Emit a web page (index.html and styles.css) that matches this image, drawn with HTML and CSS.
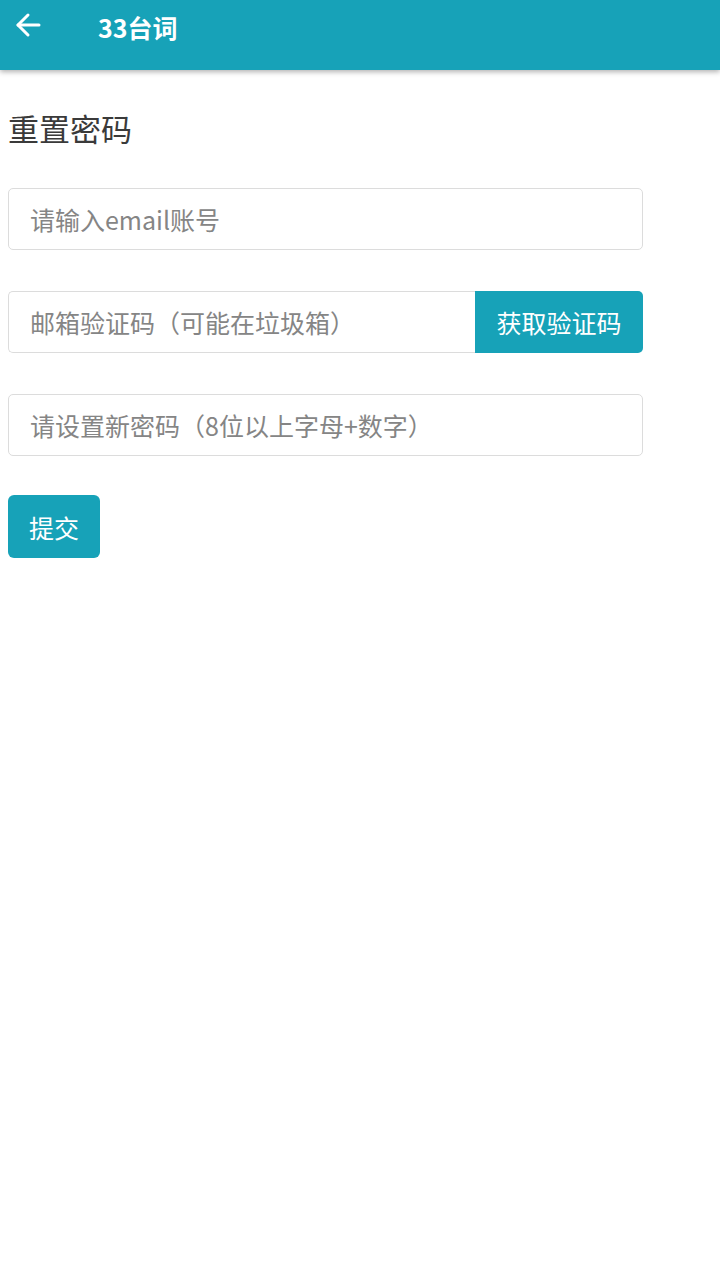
FILE: index.html
```html
<!DOCTYPE html>
<html lang="zh">
<head>
<meta charset="utf-8">
<link rel="stylesheet" href="styles.css">
</head>
<body>
<header class="topbar">
  <svg class="back" width="28" height="28" viewBox="0 0 28 28" fill="none" stroke="#fff" stroke-width="3" stroke-linecap="round" stroke-linejoin="round">
    <path d="M25 14H4"/>
    <path d="M14 4L4 14l10 10"/>
  </svg>
  <div class="title">33台词</div>
</header>
<main class="content">
  <h1 class="heading">重置密码</h1>
  <div class="field"><input class="input" placeholder="请输入email账号"></div>
  <div class="field">
    <input class="input joined" placeholder="邮箱验证码（可能在垃圾箱）">
    <button class="btn code">获取验证码</button>
  </div>
  <div class="field last"><input class="input" placeholder="请设置新密码（8位以上字母+数字）"></div>
  <button class="btn submit">提交</button>
</main>
</body>
</html>
```
FILE: styles.css
```css
html, body {
  margin: 0;
  padding: 0;
  background: #fff;
  font-family: "Noto Sans CJK SC", "Roboto", "Noto Sans", sans-serif;
}
.topbar {
  height: 70px;
  background: #17a2b8;
  display: flex;
  align-items: flex-start;
  padding: 0 0 0 14px;
  box-shadow: 0 2px 5px rgba(0,0,0,0.3);
  position: relative;
  z-index: 1;
}
.back {
  margin-top: 11px;
}
.title {
  color: #fff;
  font-weight: 700;
  font-size: 25px;
  line-height: 54px;
  margin-left: 56px;
}
.content {
  padding: 34px 0 0 8px;
  display: flex;
  flex-direction: column;
  align-items: flex-start;
}
.heading {
  margin: 0 0 36px 0;
  font-size: 31px;
  font-weight: 400;
  color: #3a3a3a;
  line-height: 48px;
}
.field {
  width: 635px;
  display: flex;
  margin-bottom: 41px;
}
.field.last {
  margin-bottom: 39px;
}
.input {
  flex: 1;
  min-width: 0;
  height: 62px;
  box-sizing: border-box;
  border: 1px solid #dcdcdc;
  border-radius: 5px;
  padding: 0 21px;
  font-family: inherit;
  font-size: 25px;
  color: #333;
  outline: none;
  background: #fff;
}
.input::placeholder {
  color: #858585;
}
.input.joined {
  border-top-right-radius: 0;
  border-bottom-right-radius: 0;
  border-right: none;
}
.btn {
  background: #17a2b8;
  color: #fff;
  border: none;
  font-family: inherit;
  font-size: 25px;
  padding: 0;
  cursor: pointer;
}
.code {
  width: 168px;
  height: 62px;
  border-radius: 0 5px 5px 0;
}
.submit {
  width: 92px;
  height: 63px;
  border-radius: 6px;
}
```
